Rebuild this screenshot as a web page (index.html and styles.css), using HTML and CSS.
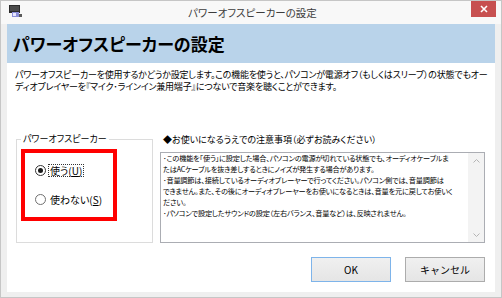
FILE: index.html
```html
<!doctype html>
<html lang="ja">
  <head>
    <title>パワーオフスピーカーの設定</title>
    <link rel="stylesheet" href="styles.css">
  </head>
  <body>
    <div class="window">
      <div class="titlebar">
        <svg class="app-icon" width="13" height="13" viewBox="0 0 13 13">
          <rect x="0" y="0" width="11" height="8" fill="#2b2b2b"/>
          <rect x="1" y="1" width="9" height="5" fill="#4a4a4a"/>
          <rect x="3" y="7" width="7" height="5" fill="#8c8fd8"/>
          <rect x="4" y="8" width="3" height="3" fill="#e8e8ff"/>
          <rect x="10" y="9" width="3" height="3" fill="#5a5a5a"/>
        </svg>
        <div class="caption">パワーオフスピーカーの設定</div>
        <div class="close-btn">
          <svg width="8" height="8" viewBox="0 0 8 8">
            <path d="M1 1 L7 7 M7 1 L1 7" stroke="#fff" stroke-width="1.6"/>
          </svg>
        </div>
      </div>
      <div class="client">
        <div class="header">パワーオフスピーカーの設定</div>
        <p class="desc">
          パワーオフスピーカーを使用するかどうか設定します。この機能を使うと、パソコンが電源オフ（もしくはスリープ）の状態でもオー<br>
          ディオプレイヤーを『マイク･ラインイン兼用端子』につないで音楽を聴くことができます。
        </p>
        <div class="main">
          <fieldset class="group">
            <legend>パワーオフスピーカー</legend>
            <div class="highlight">
              <label class="radio-row">
                <span class="radio checked"></span>
                <span class="radio-label focus">使う(<u>U</u>)</span>
              </label>
              <label class="radio-row">
                <span class="radio"></span>
                <span class="radio-label">使わない(<u>S</u>)</span>
              </label>
            </div>
          </fieldset>
          <div class="notes">
            <div class="notes-title">◆お使いになるうえでの注意事項（必ずお読みください）</div>
            <div class="notes-box">
              <div class="notes-text">
                ･この機能を「使う」に設定した場合、パソコンの電源が切れている状態でも、オーディオケーブルま<br>
                たはACケーブルを抜き差しするときにノイズが発生する場合があります。<br>
                ･音量調節は、接続しているオーディオプレーヤーで行ってください。パソコン側では、音量調節は<br>
                できません。また、その後にオーディオプレーヤーをお使いになるときは、音量を元に戻してお使いく<br>
                ださい。<br>
                ･パソコンで設定したサウンドの設定（左右バランス、音量など）は、反映されません。
              </div>
              <div class="scrollbar">
                <svg width="7" height="4" viewBox="0 0 7 4"><path d="M0.5 3.5 L3.5 0.5 L6.5 3.5" fill="none" stroke="#b4b4b4"/></svg>
                <svg width="7" height="4" viewBox="0 0 7 4"><path d="M0.5 0.5 L3.5 3.5 L6.5 0.5" fill="none" stroke="#b4b4b4"/></svg>
              </div>
            </div>
          </div>
        </div>
        <div class="buttons">
          <button class="btn btn-default">OK</button>
          <button class="btn">キャンセル</button>
        </div>
      </div>
    </div>
  </body>
</html>
```

FILE: styles.css
```css
* {
  box-sizing: border-box;
}
body {
  margin: 0;
  font-family: "Noto Sans CJK JP", "Noto Sans", sans-serif;
  font-feature-settings: "palt";
  color: #000;
}
.window {
  width: 502px;
  height: 298px;
  background: #efefef;
  border: 1px solid #c6c6c6;
  display: flex;
  flex-direction: column;
}
.titlebar {
  height: 23px;
  display: grid;
  grid-template-columns: 1fr auto 1fr;
  align-items: center;
  padding: 0 5px 0 8px;
  background: #f8f8f8;
}
.app-icon {
  justify-self: start;
  margin-top: -2px;
}
.caption {
  font-size: 10.5px;
  color: #3c3c3c;
}
.close-btn {
  justify-self: end;
  align-self: start;
  width: 25px;
  height: 16px;
  background: #c75050;
  display: flex;
  align-items: center;
  justify-content: center;
}
.client {
  flex: 1;
  margin: 0 6px 5px 6px;
  background: #fff;
  display: flex;
  flex-direction: column;
}
.header {
  height: 39px;
  line-height: 39px;
  padding-left: 6px;
  background: #b9d3ea;
  font-size: 17px;
  font-weight: bold;
}
.desc {
  margin: 6px 0 0;
  padding-left: 8px;
  font-size: 9px;
  letter-spacing: -0.2px;
  line-height: 12px;
  white-space: nowrap;
}
.main {
  margin-top: 40px;
  height: 110px;
  display: flex;
  padding: 0 10px 0 9px;
}
.group {
  flex-shrink: 0;
  width: 137px;
  margin: 0;
  padding: 0;
  border: 1px solid #dcdcdc;
  min-inline-size: 0;
}
.group legend {
  margin-left: 4px;
  padding: 0 2px;
  font-size: 9px;
  line-height: 12px;
  white-space: nowrap;
}
.highlight {
  width: 96px;
  height: 72px;
  margin: 4px 0 0 4px;
  border: 4px solid #ff0000;
  padding: 7px 0 0 10px;
  display: flex;
  flex-direction: column;
  gap: 9px;
}
.radio-row {
  height: 20px;
  display: flex;
  align-items: center;
  gap: 2px;
  font-size: 10px;
}
.radio {
  flex-shrink: 0;
  width: 11px;
  height: 11px;
  border: 1px solid #707070;
  border-radius: 50%;
  background: #fff;
  display: flex;
  align-items: center;
  justify-content: center;
}
.radio.checked {
  border-color: #333;
}
.radio.checked::after {
  content: "";
  width: 5px;
  height: 5px;
  border-radius: 50%;
  background: #1a1a1a;
}
.radio-label {
  padding: 0 1px;
  line-height: 11px;
  border: 1px solid transparent;
  white-space: nowrap;
}
.radio-label.focus {
  border: 1px dotted #333;
}
.notes {
  flex: 1;
  min-width: 0;
  margin-left: 7px;
  display: flex;
  flex-direction: column;
}
.notes-title {
  padding-left: 3px;
  margin-top: 1px;
  font-size: 9px;
  line-height: 12px;
  white-space: nowrap;
}
.notes-box {
  margin-top: 6px;
  flex: 1;
  min-height: 0;
  border: 1px solid #abadb3;
  display: flex;
}
.notes-text {
  flex: 1;
  min-width: 0;
  padding: 0 2px;
  font-size: 7.2px;
  letter-spacing: -0.2px;
  line-height: 11px;
  white-space: nowrap;
  overflow: hidden;
}
.scrollbar {
  flex-shrink: 0;
  width: 16px;
  background: #f3f3f3;
  display: flex;
  flex-direction: column;
  justify-content: space-between;
  align-items: center;
  padding: 6px 0 5px;
}
.buttons {
  margin-top: 14px;
  padding-right: 10px;
  display: flex;
  justify-content: flex-end;
  gap: 14px;
}
.btn {
  width: 80px;
  height: 25px;
  border: 1px solid #acacac;
  background: linear-gradient(#f0f0f0, #e5e5e5);
  font-family: inherit;
  font-size: 10px;
  color: #000;
  padding: 0;
}
.btn-default {
  border-color: #7eb4ea;
}
```
